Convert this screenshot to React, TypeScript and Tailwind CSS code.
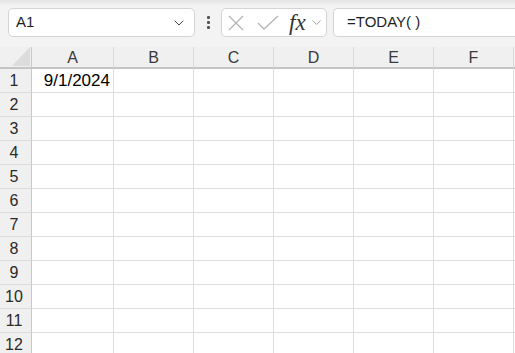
import { ChevronDown } from "lucide-react";

const columns = ["A", "B", "C", "D", "E", "F", ""];
const rows = Array.from({ length: 12 }, (_, i) => i + 1);

function Toolbar() {
  return (
    <div className="flex h-[47px] items-start gap-0 bg-[linear-gradient(#e4e4e4,#f3f3f3_6px,#f3f3f3)] pt-[8px] pl-[8px]">
      <div className="flex h-[29px] w-[187px] items-center justify-between rounded-[5px] border border-[#d4d4d4] bg-white pl-[7px] pr-[7px]">
        <span className="text-[15px] text-[#1f1f1f]">A1</span>
        <ChevronDown size={16} strokeWidth={1.5} className="text-[#444]" />
      </div>
      <div className="flex h-[29px] w-[26px] flex-col items-center justify-center gap-[2px]">
        <span className="h-[3px] w-[3px] rounded-[1px] bg-[#555]" />
        <span className="h-[3px] w-[3px] rounded-[1px] bg-[#555]" />
        <span className="h-[3px] w-[3px] rounded-[1px] bg-[#555]" />
      </div>
      <div className="flex h-[29px] w-[106px] items-center rounded-[5px] border border-[#d4d4d4] bg-white pl-[5px]">
        <svg width="18" height="18" viewBox="0 0 18 18" className="text-[#b4b4b4]">
          <path d="M2 2 L16 16 M16 2 L2 16" stroke="currentColor" strokeWidth="1.3" fill="none" />
        </svg>
        <svg width="22" height="18" viewBox="0 0 22 18" className="ml-[12px] text-[#b4b4b4]">
          <path d="M1 9 L7 15 L21 2" stroke="currentColor" strokeWidth="1.3" fill="none" />
        </svg>
        <span className="ml-[10px] font-['Liberation_Serif',serif] text-[23px] italic leading-none text-[#333]">
          fx
        </span>
        <ChevronDown size={15} strokeWidth={1.3} className="ml-[3px] text-[#8a8a8a]" />
      </div>
      <div className="ml-[6px] flex h-[29px] flex-1 items-center rounded-l-[5px] border border-r-0 border-[#d4d4d4] bg-white pl-[13px]">
        <span className="text-[15px] text-[#1f1f1f]">=TODAY( )</span>
      </div>
    </div>
  );
}

function Grid() {
  return (
    <div className="grid grid-cols-[32px_82px_80px_80px_80px_80px_80px_20px] bg-white">
      <div className="relative h-[22px] border-r border-b-2 border-r-[#c8c8c8] border-b-[#c4c4c4] bg-[#f0f0f0]">
        <div className="absolute right-[1px] bottom-[1px] h-0 w-0 border-b-[19px] border-l-[18px] border-b-[#dcdcdc] border-l-transparent" />
      </div>
      {columns.map((c, i) => (
        <div
          key={i}
          className="flex h-[22px] items-center justify-center border-r border-b-2 border-r-[#dcdcdc] border-b-[#c4c4c4] bg-[#f0f0f0] pt-[1px] text-[16px] text-[#3a3a3a]"
        >
          {c}
        </div>
      ))}
      {rows.map((r) => (
        <>
          <div
            key={"h" + r}
            className="flex h-[24px] items-center justify-center border-r border-b border-r-[#c8c8c8] border-b-[#dcdcdc] bg-[#f0f0f0] pr-[3px] text-[16px] text-[#2a2a2a]"
          >
            {r}
          </div>
          {columns.map((c, i) => (
            <div
              key={r + c + i}
              className="flex h-[24px] items-center justify-end border-r border-b border-[#dedede] pr-[3px] text-[17px] text-black"
            >
              {r === 1 && c === "A" ? "9/1/2024" : ""}
            </div>
          ))}
        </>
      ))}
    </div>
  );
}

export default function App() {
  return (
    <div className="h-[353px] w-[515px] overflow-hidden bg-[#f3f3f3] font-['Liberation_Sans',Arial,sans-serif]">
      <Toolbar />
      <Grid />
    </div>
  );
}
